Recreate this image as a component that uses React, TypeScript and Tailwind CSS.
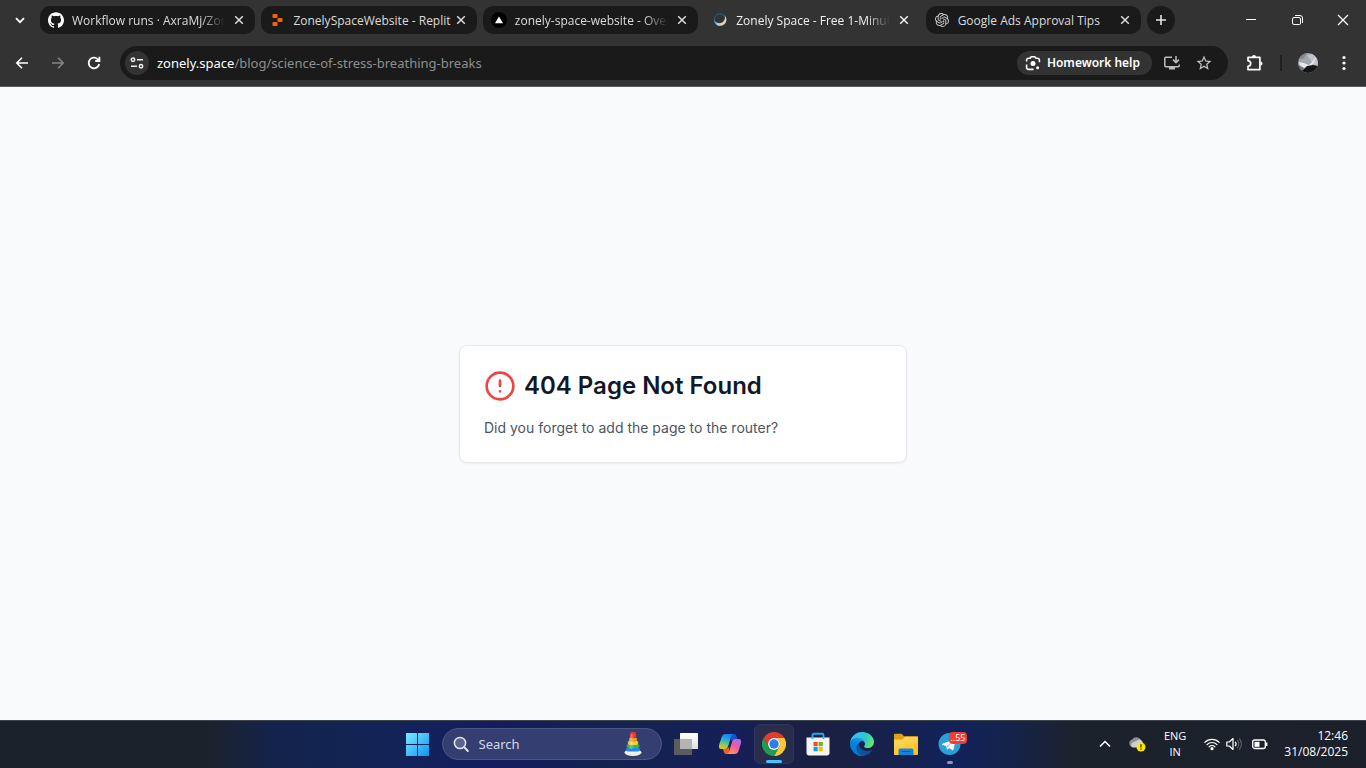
import type { ReactNode } from "react";
import { SiGithub, SiOpenai } from "react-icons/si";

type IconProps = { className?: string };

const MdIcon = ({ d, className = "size-4" }: { d: string; className?: string }) => (
  <svg viewBox="0 0 24 24" className={className} fill="currentColor" aria-hidden="true">
    <path d={d} />
  </svg>
);

const Stroke = ({
  d,
  className = "size-4",
  width = 1.6,
}: {
  d: string;
  className?: string;
  width?: number;
}) => (
  <svg
    viewBox="0 0 16 16"
    className={className}
    fill="none"
    stroke="currentColor"
    strokeWidth={width}
    aria-hidden="true"
  >
    <path d={d} />
  </svg>
);

const ReplitIcon = () => (
  <svg viewBox="0 0 16 16" className="size-4" fill="#f26207" aria-hidden="true">
    <rect x="3.500" y="2" width="5" height="4" rx="0.8" />
    <rect x="8.500" y="6" width="5" height="4" rx="0.8" />
    <rect x="3.500" y="10" width="5" height="4" rx="0.8" />
  </svg>
);

const VercelIcon = () => (
  <svg viewBox="0 0 16 16" className="size-4" aria-hidden="true">
    <circle cx="8" cy="8" r="8" fill="#000" />
    <path d="M8 4.4 12 11.2H4z" fill="#fff" />
  </svg>
);

const MoonIcon = () => (
  <svg viewBox="0 0 16 16" className="size-4" fill="none" aria-hidden="true">
    <defs>
      <linearGradient id="moon" x1="0" y1="0.2" x2="1" y2="0.6">
        <stop offset="0" stopColor="#2c6f9c" />
        <stop offset="0.5" stopColor="#b4d6e4" />
        <stop offset="1" stopColor="#f6cfa4" />
      </linearGradient>
    </defs>
    <circle cx="8" cy="7.500" r="5.700" stroke="#2b5f82" strokeWidth="1" />
    <path d="M2 7.800A6.200 6.200 0 1 0 12.500 3.200 5.500 5.500 0 1 1 2 7.800z" fill="url(#moon)" />
  </svg>
);

type TabInfo = { title: string; icon: ReactNode; active?: boolean; faded?: boolean };

const tabs: TabInfo[] = [
  { title: "Workflow runs · AxraMj/Zone", icon: <SiGithub className="size-4 text-white" />, faded: true },
  { title: "ZonelySpaceWebsite - Replit", icon: <ReplitIcon /> },
  { title: "zonely-space-website - Over", icon: <VercelIcon />, faded: true },
  { title: "Zonely Space - Free 1-Minut", icon: <MoonIcon />, active: true, faded: true },
  { title: "Google Ads Approval Tips", icon: <SiOpenai className="size-3.5 mx-px text-[#cfcfcf]" /> },
];

function Tab({ title, icon, active, faded }: TabInfo) {
  return (
    <div
      className={`flex h-7 min-w-0 flex-1 items-center rounded-[10px] pr-2 pl-2 ${
        active ? "bg-[#333333] text-[#f0f0f0]" : "bg-[#1a1a1a] text-[#dcdcdc]"
      }`}
    >
      <span className="shrink-0">{icon}</span>
      <span
        className={`ml-2 min-w-0 flex-1 overflow-hidden pt-px text-[12px] leading-[18px] whitespace-nowrap font-['Open_Sans','Noto_Sans',sans-serif] ${
          faded ? "[mask-image:linear-gradient(to_right,black_calc(100%-28px),transparent_calc(100%-4px))]" : ""
        }`}
      >
        {title}
      </span>
      <button type="button" aria-label={`Close ${title}`} className="ml-0.5 grid size-4 shrink-0 place-items-center">
        <Stroke d="M4.200 4.200l7.600 7.600M11.800 4.200l-7.600 7.600" width={1.5} />
      </button>
    </div>
  );
}

function TabStrip() {
  return (
    <div className="flex h-10 items-center">
      <button type="button" aria-label="Search tabs" className="grid h-7 w-10 shrink-0 place-items-center text-white">
        <Stroke d="M4 6.200l4 4 4-4" width={1.8} />
      </button>
      <div className="flex min-w-0 flex-1 gap-1.5">
        {tabs.map((tab) => (
          <Tab key={tab.title} {...tab} />
        ))}
        <button
          type="button"
          aria-label="New tab"
          className="grid size-7 shrink-0 place-items-center rounded-full bg-[#1a1a1a] text-[#e3e3e3]"
        >
          <Stroke d="M8 3v10M3 8h10" />
        </button>
      </div>
      <div className="ml-[53px] flex shrink-0 text-white">
        <button type="button" aria-label="Minimize" className="grid h-10 w-[46px] place-items-center">
          <Stroke d="M3 7.500h10" width={1} />
        </button>
        <button type="button" aria-label="Restore" className="grid h-10 w-[46px] place-items-center">
          <Stroke
            d="M5 5.500h5A1.500 1.500 0 0 1 11.500 7v5A1 1 0 0 1 10.500 12.500H5A1.500 1.500 0 0 1 3.500 11V7A1.500 1.500 0 0 1 5 5.500zM6 3.500h5A2.500 2.500 0 0 1 13.500 6v5"
            width={1}
          />
        </button>
        <button type="button" aria-label="Close window" className="grid h-10 w-[46px] place-items-center">
          <Stroke d="M3 3l10 10M13 3L3 13" width={1.2} />
        </button>
      </div>
    </div>
  );
}

function LensIcon() {
  return (
    <svg viewBox="0 0 16 16" className="size-4" fill="none" stroke="currentColor" strokeWidth="1.6" aria-hidden="true">
      <path d="M1.600 6.500V5.200a2 2 0 0 1 2-2h1.600L6.200 1.800h3.600l1 1.400h1.600a2 2 0 0 1 2 2v2M1.600 9.500v2.900a2 2 0 0 0 2 2H8.500" />
      <circle cx="8" cy="8.500" r="2.500" fill="currentColor" stroke="none" />
      <circle cx="12.600" cy="12.800" r="1.500" fill="currentColor" stroke="none" />
    </svg>
  );
}

function Toolbar() {
  return (
    <div className="flex h-[46px] items-center">
      <div className="flex shrink-0 items-center gap-5 pr-[18px] pl-3.5 text-white">
        <button type="button" aria-label="Back">
          <Stroke d="M14 8H3M8 2.800L2.800 8 8 13.200" />
        </button>
        <button type="button" aria-label="Forward" className="text-[#858585]">
          <Stroke d="M2 8h11M8 2.800L13.200 8 8 13.200" />
        </button>
        <button type="button" aria-label="Reload">
          <Stroke d="M13.200 9A5.300 5.300 0 1 1 11.800 4.300L13 5.500M13.400 1.800v4.200H9.200" width={1.8} />
        </button>
      </div>
      <div className="flex h-[34px] min-w-0 flex-1 items-center rounded-full bg-[#1a1a1a] pr-[15px] pl-[5px]">
        <button
          type="button"
          aria-label="View site information"
          className="grid size-6 shrink-0 place-items-center rounded-full bg-[#333333] text-[#eeeeee]"
        >
          <svg viewBox="0 0 16 16" className="size-4" fill="none" stroke="currentColor" strokeWidth="1.500" aria-hidden="true">
            <circle cx="4" cy="4.800" r="1.700" />
            <path d="M8 4.800h6M2 11.200h6" />
            <circle cx="12" cy="11.200" r="1.700" />
          </svg>
        </button>
        <a href="#page" className="ml-2 min-w-0 flex-1 truncate text-[13px] leading-5 text-[#8f8f8f]">
          <span className="text-white">zonely.space</span>/blog/science-of-stress-breathing-breaks
        </a>
        <button
          type="button"
          className="flex h-6 shrink-0 items-center gap-1.5 rounded-full bg-[#333333] pr-3 pl-2 text-[12px] leading-5 font-semibold text-white"
        >
          <LensIcon />
          Homework help
        </button>
        <button type="button" aria-label="Install app" className="ml-3 text-[#bdbdbd]">
          <svg viewBox="0 0 16 16" className="size-4" fill="none" stroke="currentColor" strokeWidth="1.500" aria-hidden="true">
            <path d="M8 2.200H1.800a1 1 0 0 0-1 1v7.600a1 1 0 0 0 1 1h12.400a1 1 0 0 0 1-1V9.500M12 1v6M9 4.600l3 3 3-3" />
            <path d="M5 12h6v2.500H5z" fill="currentColor" stroke="none" />
          </svg>
        </button>
        <button type="button" aria-label="Bookmark this tab" className="ml-[15px] text-[#c4c4c4]">
          <MdIcon
            className="size-4.5"
            d="M22 9.240l-7.190-.620L12 2 9.190 8.630 2 9.240l5.460 4.730L5.820 21 12 17.270 18.180 21l-1.630-7.030L22 9.240zM12 15.400l-3.760 2.270 1-4.280-3.320-2.880 4.380-.380L12 6.100l1.710 4.040 4.380.380-3.320 2.880 1 4.280L12 15.400z"
          />
        </button>
      </div>
      <div className="flex shrink-0 items-center pr-3.5 pl-[18px] text-white">
        <button type="button" aria-label="Extensions">
          <svg viewBox="0 0 18 18" className="size-[18px]" fill="none" stroke="currentColor" strokeWidth="1.700" aria-hidden="true">
            <path d="M2 3.400H13.900V15.600H2V12.300C4 12 4.700 10.900 4.700 9.500S4 7 2 6.700z" strokeLinejoin="round" />
            <path d="M6 3a2 2 0 0 1 4 0zM14.500 7.500a2 2 0 0 1 0 4z" fill="currentColor" stroke="none" />
          </svg>
        </button>
        <span className="ml-4 h-4 w-0.5 bg-[#1f1f1f]" />
        <button type="button" aria-label="Profile" className="ml-4">
          <svg viewBox="0 0 20 20" className="size-5" aria-hidden="true">
            <defs>
              <clipPath id="avatar">
                <circle cx="10" cy="10" r="10" />
              </clipPath>
            </defs>
            <g clipPath="url(#avatar)">
              <rect width="20" height="20" fill="#a3a7ae" />
              <path d="M0 0h9l-3 5-6 2z" fill="#82878f" />
              <path d="M9 2l6-1 5 5v8l-5-3z" fill="#c0c4ca" />
              <path d="M1 9l5 1 5 2 3-3 4-5-2 6-4 4-6 1-4-2z" fill="#e6e7e8" />
              <path d="M0 13l3 1 2 3 4-4 6-1 5 1v7H0z" fill="#141518" />
              <path d="M1 12l5 3-2 3-3-2z" fill="#74777b" />
            </g>
          </svg>
        </button>
        <button type="button" aria-label="Menu" className="ml-[18px]">
          <svg viewBox="0 0 16 16" className="size-4" fill="currentColor" aria-hidden="true">
            <circle cx="8" cy="2.500" r="1.600" />
            <circle cx="8" cy="8" r="1.600" />
            <circle cx="8" cy="13.500" r="1.600" />
          </svg>
        </button>
      </div>
    </div>
  );
}

function NotFound() {
  return (
    <main
      id="page"
      className="flex flex-1 items-center justify-center bg-[#f9fafc] px-4 font-['Inter','Liberation_Sans',sans-serif]"
    >
      <section className="w-full max-w-md rounded-lg border border-[#e5e7eb] bg-white p-6 shadow-xs">
        <div className="flex items-center gap-2">
          <svg viewBox="0 0 24 24" className="size-8" fill="none" stroke="#ef4444" strokeWidth="2" strokeLinecap="round" aria-hidden="true">
            <circle cx="12" cy="12" r="10" />
            <path d="M12 8v4M12 16h.01" />
          </svg>
          <h1 className="text-2xl font-semibold text-[#111827]">404 Page Not Found</h1>
        </div>
        <p className="mt-4 text-sm text-[#4b5563]">Did you forget to add the page to the router?</p>
      </section>
    </main>
  );
}

const StartIcon = () => (
  <svg viewBox="0 0 24 24" className="size-6" aria-hidden="true">
    <defs>
      <linearGradient id="win" x1="0" y1="0" x2="24" y2="24" gradientUnits="userSpaceOnUse">
        <stop stopColor="#7ceeff" />
        <stop offset="1" stopColor="#0f94f5" />
      </linearGradient>
    </defs>
    <path d="M1 1h11v11H1zM13 1h11v11H13zM1 13h11v11H1zM13 13h11v11H13z" fill="url(#win)" />
  </svg>
);

const StackingToy = () => (
  <svg viewBox="0 0 20 26" className="h-[26px] w-5" aria-hidden="true">
    <defs>
      <linearGradient id="toy" x1="0" x2="1">
        <stop offset="0" stopColor="#000" stopOpacity="0.100" />
        <stop offset="0.350" stopColor="#fff" stopOpacity="0.300" />
        <stop offset="0.600" stopColor="#fff" stopOpacity="0" />
        <stop offset="1" stopColor="#000" stopOpacity="0.180" />
      </linearGradient>
    </defs>
    <ellipse cx="10" cy="21.500" rx="8.500" ry="3.500" fill="#f3eee4" />
    <rect x="3" y="16" width="14" height="4.500" rx="2.200" fill="#1e8bea" />
    <rect x="3.500" y="13" width="13" height="4" rx="2" fill="#35b84b" />
    <rect x="4.700" y="9.800" width="10.600" height="4.200" rx="2" fill="#f7d22f" />
    <rect x="6" y="6.500" width="8" height="4.200" rx="2" fill="#f79722" />
    <circle cx="10" cy="4" r="3.200" fill="#e5392e" />
    <path d="M8 3h4l5 15H3z" fill="url(#toy)" />
  </svg>
);

const TaskViewIcon = () => (
  <svg viewBox="0 0 24 24" className="size-6" aria-hidden="true">
    <defs>
      <linearGradient id="tv" x1="0" y1="0" x2="0" y2="1">
        <stop stopColor="#ffffff" />
        <stop offset="1" stopColor="#dedede" />
      </linearGradient>
    </defs>
    <rect x="0" y="7" width="18" height="16" rx="0.500" fill="#5c5c5e" />
    <rect x="6" y="1" width="18" height="16" rx="0.500" fill="url(#tv)" />
    <rect x="6" y="7" width="12" height="10" fill="#b4b4b4" />
  </svg>
);

const CopilotIcon = () => (
  <svg viewBox="0 0 24 24" className="size-6" aria-hidden="true">
    <defs>
      <linearGradient id="cpa" x1="0.500" y1="0" x2="0.200" y2="1">
        <stop stopColor="#1b7ff0" />
        <stop offset="0.400" stopColor="#27b4dc" />
        <stop offset="0.700" stopColor="#8ccb4b" />
        <stop offset="1" stopColor="#f2bf1d" />
      </linearGradient>
      <linearGradient id="cpb" x1="0.800" y1="0" x2="0.300" y2="1">
        <stop stopColor="#a46bf5" />
        <stop offset="0.500" stopColor="#ee5a9d" />
        <stop offset="1" stopColor="#fd9c51" />
      </linearGradient>
    </defs>
    <path d="M13 2h3.200c1.200 0 1.800.7 2.200 2l1 3.200h-3c-2 0-2.800 1-3.300 2.800z" fill="#1655c8" />
    <path d="M11 22H8.200c-1.300 0-2-.8-2.300-2l-1-3.300H8c2 0 2.600-1 3.200-2.800z" fill="#f25c35" />
    <path d="M7.500 2h7.800c-1.400.3-1.900 1.500-2.400 3.200L10.200 14c-.6 1.900-1.400 3-3.300 3H3.200C1 17 .5 15 1.200 12.500L3.700 5C4.400 3 5.500 2 7.500 2z" fill="url(#cpa)" />
    <path d="M16.700 22H8.800c1.500-.3 2-1.500 2.500-3.200L14 10c.6-1.900 1.300-2.900 3.200-2.900h3.700c2.200 0 2.700 1.900 2 4.400L20.500 19c-.7 2-1.800 3-3.800 3z" fill="url(#cpb)" />
  </svg>
);

const ChromeIcon = () => (
  <svg viewBox="0 0 48 48" className="size-6" aria-hidden="true">
    <path d="M24 12H44.800A24 24 0 0 0 3.200 12L13.600 30A12 12 0 0 1 24 12z" fill="#e33b2e" />
    <path d="M24 12H44.800A24 24 0 0 1 24 48L34.400 30A12 12 0 0 0 24 12z" fill="#fcc934" />
    <path d="M13.600 30L3.200 12A24 24 0 0 0 24 48L34.400 30A12 12 0 0 1 13.600 30z" fill="#1f9d4d" />
    <circle cx="24" cy="24" r="12" fill="#fff" />
    <circle cx="24" cy="24" r="9.400" fill="#2b7de9" />
  </svg>
);

const StoreIcon = () => (
  <svg viewBox="0 0 24 24" className="size-6" aria-hidden="true">
    <path d="M6.500 7V3.200c0-.9.500-1.400 1.400-1.400h8.200c.9 0 1.400.5 1.400 1.400V7" fill="none" stroke="#23a8f2" strokeWidth="1.900" />
    <path d="M.5 5.500h23v15.500c0 1.400-1 2.500-2.500 2.500H3c-1.500 0-2.500-1.100-2.500-2.500z" fill="#f5f5f5" />
    <path d="M6.500 5.500V7M17.500 5.500V7" stroke="#23a8f2" strokeWidth="1.900" />
    <path d="M7.500 10h4.200v4.200H7.500z" fill="#f25022" />
    <path d="M12.600 10h4.200v4.200h-4.200z" fill="#6fb51a" />
    <path d="M7.500 15h4.200v4.200H7.500z" fill="#00a4ef" />
    <path d="M12.600 15h4.200v4.200h-4.200z" fill="#ffb900" />
  </svg>
);

const EdgeIcon = () => (
  <svg viewBox="0 0 256 256" className="size-6" aria-hidden="true">
    <defs>
      <linearGradient id="e1" x1="58" y1="177" x2="236" y2="177" gradientUnits="userSpaceOnUse">
        <stop stopColor="#0c59a4" />
        <stop offset="1" stopColor="#114a8b" />
      </linearGradient>
      <linearGradient id="e2" x1="157" y1="100" x2="46" y2="221" gradientUnits="userSpaceOnUse">
        <stop stopColor="#1b9de2" />
        <stop offset="0.160" stopColor="#1595df" />
        <stop offset="0.670" stopColor="#0680d7" />
        <stop offset="1" stopColor="#0078d4" />
      </linearGradient>
      <radialGradient id="e3" cx="26" cy="46" r="235" gradientUnits="userSpaceOnUse">
        <stop stopColor="#35c1f1" />
        <stop offset="0.300" stopColor="#34c1ed" />
        <stop offset="0.600" stopColor="#2dc6c6" />
        <stop offset="1" stopColor="#66eb6e" />
      </radialGradient>
    </defs>
    <path
      d="M231 190.500c-3.400 1.800-6.900 3.400-10.500 4.700a101.900 101.900 0 0 1-35.900 6.400c-47.300 0-88.500-32.500-88.500-74.300.1-11.400 6.400-21.900 16.400-27.300-42.800 1.800-53.800 46.400-53.800 72.500 0 74 68.100 81.400 82.800 81.400 7.900 0 19.800-2.300 27-4.600l1.300-.4a128.300 128.300 0 0 0 66.600-52.800 4 4 0 0 0-5.400-5.600z"
      fill="url(#e1)"
    />
    <path
      d="M105.700 241.400a79.200 79.200 0 0 1-22.700-21.300 80.700 80.700 0 0 1 29.500-120c3.200-1.500 8.500-4.100 15.600-4a32.400 32.400 0 0 1 25.700 13 31.900 31.900 0 0 1 6.300 18.700c0-.2 24.500-79.600-80-79.600-43.900 0-80 41.600-80 78.200a130.200 130.200 0 0 0 12.100 56 128 128 0 0 0 156.400 67 75.500 75.500 0 0 1-62.800-8z"
      fill="url(#e2)"
    />
    <path
      d="M152.300 148.900c-.9 1-3.400 2.500-3.400 5.600 0 2.600 1.700 5.200 4.800 7.300 14.300 10 41.400 8.600 41.500 8.600a59.600 59.600 0 0 0 30.300-8.300 61.400 61.400 0 0 0 30.400-52.900c.3-22.400-8-37.300-11.300-43.900C223.500 23.900 177.700 0 128 0A128 128 0 0 0 0 126.200c.5-36.500 36.800-66 80-66 3.500 0 23.500.3 42 10a72.600 72.600 0 0 1 30.900 29.300c6.100 10.600 7.200 24.100 7.200 29.500 0 5.400-2.700 13.300-7.800 19.900z"
      fill="url(#e3)"
    />
  </svg>
);

const FolderIcon = () => (
  <svg viewBox="0 0 24 24" className="size-6" aria-hidden="true">
    <defs>
      <linearGradient id="fold" x1="0" y1="0" x2="0.600" y2="1">
        <stop stopColor="#ffdc62" />
        <stop offset="1" stopColor="#fcbf27" />
      </linearGradient>
    </defs>
    <path d="M0 3c0-.8.400-1.200 1.200-1.200h6.500L10 4.200h13c.7 0 1 .3 1 1V12H0z" fill="#e0a012" />
    <path d="M0 7.500h8.500L11 4.800h12c.7 0 1 .3 1 1v16.400c0 .6-.3.800-.9.800H.9c-.6 0-.9-.2-.9-.8z" fill="url(#fold)" />
    <path d="M4.500 23v-4.200c0-1.600.8-2.300 2.300-2.300h10.400c1.500 0 2.300.7 2.300 2.300V23z" fill="#1483d8" />
    <path d="M8 19.500h8" stroke="#0b5cab" strokeWidth="1.200" strokeLinecap="round" />
  </svg>
);

const TelegramIcon = () => (
  <svg viewBox="0 0 24 24" className="size-6" aria-hidden="true">
    <circle cx="11.500" cy="12" r="11" fill="#2a9fd8" />
    <path d="M4.500 11.800L16.500 7.300c.7-.2 1.200.2 1 1.200l-2 9c-.2.800-.7 1-1.400.6l-3-2.200-1.600 1.500c-.3.300-.5.300-.6-.2l-.8-3.300-3.500-1c-.9-.3-.9-.8-.1-1.100z" fill="#fff" />
    <path d="M8.500 13.700l6.600-4.400-4.800 5.200-.7 2.600z" fill="#a9cfe6" />
  </svg>
);

const apps: { name: string; icon: ReactNode; state?: "active" | "running"; badge?: string }[] = [
  { name: "Task view", icon: <TaskViewIcon /> },
  { name: "Copilot", icon: <CopilotIcon /> },
  { name: "Google Chrome", icon: <ChromeIcon />, state: "active" },
  { name: "Microsoft Store", icon: <StoreIcon /> },
  { name: "Microsoft Edge", icon: <EdgeIcon /> },
  { name: "File Explorer", icon: <FolderIcon /> },
  { name: "Telegram", icon: <TelegramIcon />, state: "running", badge: "..55" },
];

function CloudIcon({ className }: IconProps) {
  return (
    <svg viewBox="0 0 18 16" className={className} aria-hidden="true">
      <path d="M4.500 11a3.800 3.800 0 0 1-.4-7.400A5 5 0 0 1 13 4.500z" fill="#8f8f8f" />
      <path d="M4.500 11.500a3.400 3.400 0 0 1-.5-4.500l7-3.500c2.500 0 4 2 4 4.500l-2 3.500z" fill="#cfcfcf" />
      <circle cx="13" cy="11" r="4.500" fill="#ffe600" />
      <path d="M13 8.300v3.200M13 12.500v1.200" stroke="#222" strokeWidth="1.200" />
    </svg>
  );
}

function Taskbar() {
  return (
    <footer className="grid h-12 shrink-0 grid-cols-[1fr_auto_1fr] items-center bg-[linear-gradient(90deg,#1c222b_0%,#1c222b_15%,#14234b_20%,#13235a_30%,#141c5e_36%,#14234f_45%,#151f58_54%,#1b2040_60%,#11225a_70%,#14234f_73%,#1c222c_79%,#1b202b_100%)] text-white inset-shadow-[0_1px_0_#3e444d]">
      <div />
      <div className="flex items-center">
        <button type="button" aria-label="Start" className="grid h-12 w-11 place-items-center">
          <StartIcon />
        </button>
        <label className="mr-0.5 ml-[3px] flex h-8 w-[220px] items-center rounded-full border border-[#4c5685] bg-[#343e70] pr-[18px] pl-2.5">
          <svg viewBox="0 0 16 16" className="size-4 shrink-0" fill="#5b6390" stroke="#e6e8f0" strokeWidth="1.500" strokeLinecap="round" aria-hidden="true">
            <circle cx="7" cy="7" r="5.600" />
            <path d="M11.200 11.200l3.600 3.800" strokeWidth="1.900" />
          </svg>
          <span className="sr-only">Search</span>
          <input
            type="text"
            placeholder="Search"
            className="ml-2.5 w-0 min-w-0 flex-1 bg-transparent text-[13px] leading-5 outline-none placeholder:text-[#d5d8e4]"
          />
          <StackingToy />
        </label>
        {apps.map((app) => (
          <button key={app.name} type="button" aria-label={app.name} className="grid h-12 w-11 place-items-center">
            <span
              className={`relative grid size-10 place-items-center rounded-md ${
                app.state === "active" ? "border border-[#30345a] bg-[#292d4c]" : ""
              }`}
            >
              {app.icon}
              {app.state === "active" && (
                <span className="absolute bottom-0 left-1/2 h-[3px] w-4 -translate-x-1/2 rounded-full bg-[#4cc2ff]" />
              )}
              {app.state === "running" && (
                <span className="absolute bottom-0 left-1/2 h-[3px] w-1.5 -translate-x-1/2 rounded-full bg-[#9097aa]" />
              )}
              {app.badge && (
                <span className="absolute top-2 right-[3px] h-3 rounded-sm bg-[#f23c34] px-px text-[9px] leading-3 text-white">
                  {app.badge}
                </span>
              )}
            </span>
          </button>
        ))}
      </div>
      <div className="flex items-center justify-end pr-[18px] font-['Open_Sans','Noto_Sans',sans-serif] text-[11px] leading-4">
        <button type="button" aria-label="Show hidden icons">
          <Stroke d="M3 10.500l5-5 5 5" width={1.5} />
        </button>
        <CloudIcon className="ml-[15px] h-4 w-[18px]" />
        <span className="ml-[18px] text-center">
          ENG
          <br />
          IN
        </span>
        <svg viewBox="0 0 16 16" className="ml-[18px] size-4" fill="none" stroke="currentColor" strokeWidth="1.200" strokeLinecap="round" aria-label="Wi-Fi">
          <path d="M.8 6.300a10.200 10.200 0 0 1 14.400 0M3 8.600a7 7 0 0 1 10 0M5.200 10.800a4 4 0 0 1 5.600 0" />
          <circle cx="8" cy="12.700" r="1" fill="currentColor" />
        </svg>
        <svg viewBox="0 0 16 16" className="ml-1.5 size-4" fill="none" stroke="currentColor" strokeWidth="1.200" aria-label="Volume">
          <path d="M.8 6h2.500L7 2.500v11L3.300 10H.8z" strokeLinejoin="round" />
          <path d="M9.200 5.800a3.500 3.500 0 0 1 0 4.400" />
          <path d="M11.200 4a6 6 0 0 1 0 8M13.200 2.300a8.500 8.500 0 0 1 0 11.400" stroke="#5a606a" />
        </svg>
        <svg viewBox="0 0 16 16" className="ml-2.5 size-4" fill="none" stroke="currentColor" strokeWidth="1.300" aria-label="Battery">
          <rect x=".7" y="4" width="12.600" height="8.500" rx="2" />
          <path d="M14 6.500h1.400v3.500H14z" fill="currentColor" stroke="none" />
          <rect x="2.500" y="5.800" width="5" height="5" fill="currentColor" stroke="none" />
        </svg>
        <span className="ml-4 text-right text-[12px]">
          12:46
          <br />
          31/08/2025
        </span>
      </div>
    </footer>
  );
}

export default function App() {
  return (
    <div className="flex min-h-screen flex-col font-['Noto_Sans','Open_Sans',sans-serif]">
      <header className="shrink-0 border-b border-[#5c5c5c] bg-[#333333]">
        <TabStrip />
        <Toolbar />
      </header>
      <NotFound />
      <Taskbar />
    </div>
  );
}
